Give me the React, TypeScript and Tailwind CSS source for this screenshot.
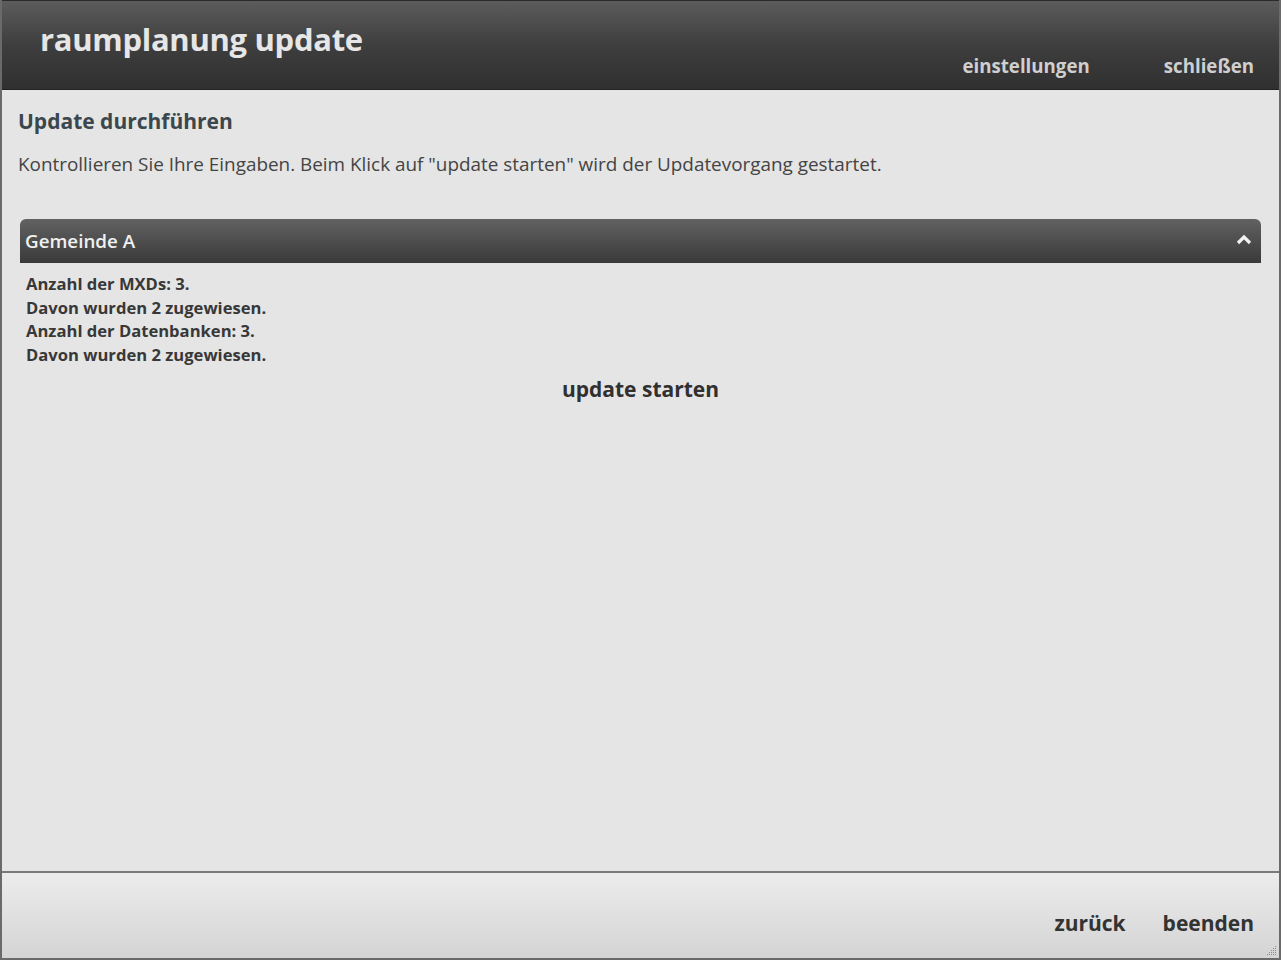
export default function App() {
  const font = { fontFamily: '"Open Sans", "Noto Sans", sans-serif' };
  return (
    <div
      className="w-[1281px] h-[960px] flex flex-col bg-[#e5e5e5] border-l-2 border-r-2 border-b-2 border-[#6a6a6a] overflow-hidden"
      style={font}
    >
      {/* title bar */}
      <header className="h-[90px] shrink-0 flex justify-between bg-gradient-to-b from-[#5c5c5c] via-[#3e3e3e] to-[#303030] border-t border-[#2a2a2a] border-b border-b-[#222]">
        <h1 className="pl-[38px] pt-[18px] text-[31px] font-bold text-[#e6e6e6] tracking-[-0.3px] leading-[40px]">
          raumplanung update
        </h1>
        <nav className="flex items-end gap-[74px] pr-[25px] pb-[9px] text-[18.7px] font-bold text-[#cfcfcf]">
          <span>einstellungen</span>
          <span>schließen</span>
        </nav>
      </header>

      {/* content */}
      <main className="flex-1 flex flex-col px-[16px]">
        <h2 className="mt-[16px] text-[21px] font-bold text-[#3b474c] leading-[30px]">Update durchführen</h2>
        <p className="mt-[15px] text-[18.9px] text-[#444] leading-[26px]">
          Kontrollieren Sie Ihre Eingaben. Beim Klick auf "update starten" wird der Updatevorgang gestartet.
        </p>

        <section className="mt-[42px] mx-[2px]">
          <div className="h-[44px] flex items-center justify-between px-[5px] rounded-t-[6px] bg-gradient-to-b from-[#626262] to-[#3a3a3a]">
            <span className="text-[18.8px] font-semibold text-[#f0f0f0]">Gemeinde A</span>
            <svg width="16" height="12" viewBox="0 0 16 12" className="mr-[4px] mb-[2px]">
              <path d="M2 9 L8 3 L14 9" stroke="#f2f2f2" strokeWidth="3.2" fill="none" />
            </svg>
          </div>
          <div className="pt-[9px] pl-[6px] text-[16.6px] font-bold text-[#383838] leading-[23.5px]">
            <div>Anzahl der MXDs: 3.</div>
            <div>Davon wurden 2 zugewiesen.</div>
            <div>Anzahl der Datenbanken: 3.</div>
            <div>Davon wurden 2 zugewiesen.</div>
          </div>
          <div className="mt-[8px] flex justify-center">
            <span className="text-[21px] font-bold text-[#303030] leading-[30px]">update starten</span>
          </div>
        </section>
      </main>

      {/* footer */}
      <footer className="relative h-[87px] shrink-0 flex justify-end items-center gap-[37px] pr-[25px] pt-[16px] border-t-2 border-[#7a7a7a] bg-gradient-to-b from-[#ececec] to-[#d4d4d4]">
        <span className="text-[21px] font-bold text-[#333]">zurück</span>
        <span className="text-[21px] font-bold text-[#333]">beenden</span>
        <svg width="10" height="10" viewBox="0 0 10 10" className="absolute right-[2px] bottom-[2px]">
          {[
            [8, 0], [8, 2], [6, 2], [8, 4], [6, 4], [4, 4], [8, 6], [6, 6], [4, 6], [2, 6], [8, 8], [6, 8], [4, 8], [2, 8], [0, 8],
          ].map(([x, y], i) => (
            <rect key={i} x={x} y={y} width="1" height="1" fill="#8a8a8a" />
          ))}
        </svg>
      </footer>
    </div>
  );
}
